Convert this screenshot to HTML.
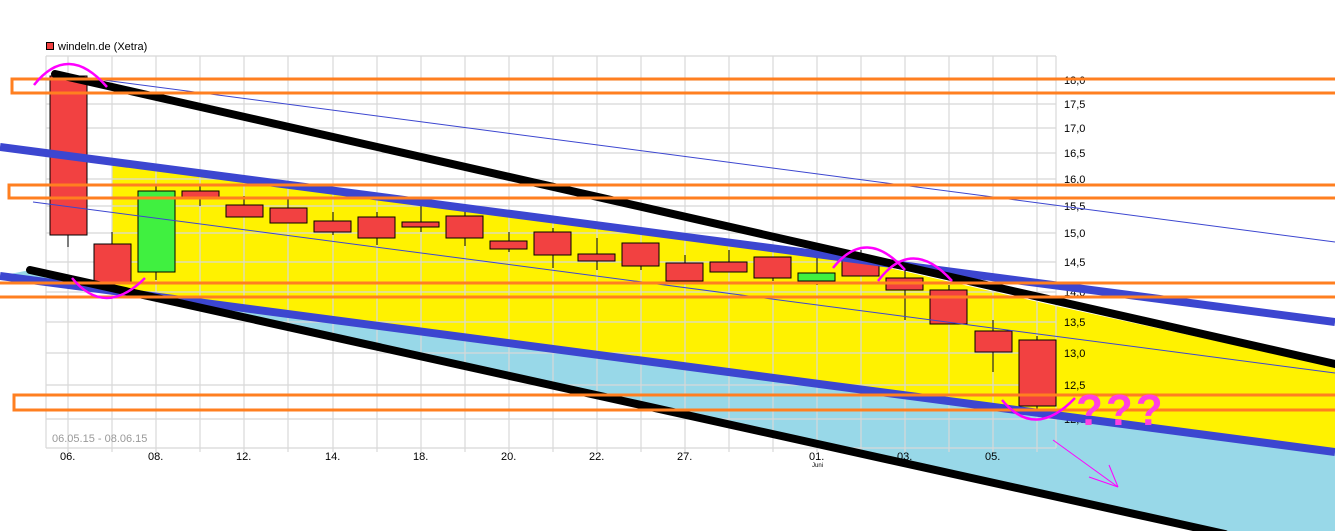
<!DOCTYPE html>
<html><head><meta charset="utf-8"><style>
html,body{margin:0;padding:0;background:#fff;width:1335px;height:531px;overflow:hidden}
svg{display:block}
text{font-family:"Liberation Sans",sans-serif}
</style></head><body>
<svg width="1335" height="531" viewBox="0 0 1335 531" xmlns="http://www.w3.org/2000/svg">
<rect width="1335" height="531" fill="#fff"/>
<polygon points="0,276 1335,452 1335,531 1215,531 30,270" fill="#98d8e8"/>
<polygon points="112,162 850,259 1056,306 1335,367 1335,452 112,291" fill="#fff200"/>
<g stroke="#d8d8d8" stroke-width="1.2">
<line x1="46" y1="56" x2="1056" y2="56"/>
<line x1="46" y1="80" x2="1056" y2="80"/><line x1="46" y1="104" x2="1056" y2="104"/>
<line x1="46" y1="128" x2="1056" y2="128"/><line x1="46" y1="153" x2="1056" y2="153"/>
<line x1="46" y1="179" x2="1056" y2="179"/><line x1="46" y1="206" x2="1056" y2="206"/>
<line x1="46" y1="233" x2="1056" y2="233"/><line x1="46" y1="262" x2="1056" y2="262"/>
<line x1="46" y1="292" x2="1056" y2="292"/><line x1="46" y1="322" x2="1056" y2="322"/>
<line x1="46" y1="353" x2="1056" y2="353"/><line x1="46" y1="385" x2="1056" y2="385"/>
<line x1="46" y1="419" x2="1056" y2="419"/><line x1="46" y1="448" x2="1056" y2="448"/>
<line x1="46" y1="56" x2="46" y2="448"/><line x1="1056" y1="56" x2="1056" y2="448"/>
<line x1="68" y1="56" x2="68" y2="452"/><line x1="112" y1="56" x2="112" y2="452"/><line x1="156" y1="56" x2="156" y2="452"/><line x1="200" y1="56" x2="200" y2="452"/><line x1="244" y1="56" x2="244" y2="452"/><line x1="288" y1="56" x2="288" y2="452"/><line x1="333" y1="56" x2="333" y2="452"/><line x1="377" y1="56" x2="377" y2="452"/><line x1="421" y1="56" x2="421" y2="452"/><line x1="465" y1="56" x2="465" y2="452"/><line x1="509" y1="56" x2="509" y2="452"/><line x1="553" y1="56" x2="553" y2="452"/><line x1="597" y1="56" x2="597" y2="452"/><line x1="641" y1="56" x2="641" y2="452"/><line x1="685" y1="56" x2="685" y2="452"/><line x1="729" y1="56" x2="729" y2="452"/><line x1="773" y1="56" x2="773" y2="452"/><line x1="817" y1="56" x2="817" y2="452"/><line x1="861" y1="56" x2="861" y2="452"/><line x1="905" y1="56" x2="905" y2="452"/><line x1="949" y1="56" x2="949" y2="452"/><line x1="993" y1="56" x2="993" y2="452"/><line x1="1037" y1="56" x2="1037" y2="452"/>
</g>
<g stroke="#000" stroke-width="1">
<line x1="68" y1="76" x2="68" y2="247"/><line x1="112" y1="232" x2="112" y2="290"/><line x1="156" y1="186" x2="156" y2="280"/><line x1="200" y1="186" x2="200" y2="206"/><line x1="244" y1="196" x2="244" y2="217"/><line x1="288" y1="198" x2="288" y2="223"/><line x1="333" y1="212" x2="333" y2="235"/><line x1="377" y1="212" x2="377" y2="245"/><line x1="421" y1="206" x2="421" y2="232"/><line x1="465" y1="210" x2="465" y2="246"/><line x1="509" y1="232" x2="509" y2="252"/><line x1="553" y1="228" x2="553" y2="268"/><line x1="597" y1="238" x2="597" y2="270"/><line x1="641" y1="243" x2="641" y2="270"/><line x1="685" y1="255" x2="685" y2="281"/><line x1="729" y1="250" x2="729" y2="272"/><line x1="773" y1="257" x2="773" y2="281"/><line x1="817" y1="258" x2="817" y2="285"/><line x1="861" y1="250" x2="861" y2="276"/><line x1="905" y1="265" x2="905" y2="320"/><line x1="949" y1="285" x2="949" y2="324"/><line x1="993" y1="320" x2="993" y2="372"/><line x1="1037" y1="336" x2="1037" y2="412"/>
</g>
<g stroke="#000" stroke-width="1" fill="#f24141">
<rect x="50" y="76" width="37" height="159"/><rect x="94" y="244" width="37" height="39"/>
<rect x="138" y="191" width="37" height="81" fill="#40f040"/>
<rect x="182" y="191" width="37" height="7"/><rect x="226" y="205" width="37" height="12"/><rect x="270" y="208" width="37" height="15"/><rect x="314" y="221" width="37" height="11"/><rect x="358" y="217" width="37" height="21"/><rect x="402" y="222" width="37" height="5"/><rect x="446" y="216" width="37" height="22"/><rect x="490" y="241" width="37" height="8"/><rect x="534" y="232" width="37" height="23"/><rect x="578" y="254" width="37" height="7"/><rect x="622" y="243" width="37" height="23"/><rect x="666" y="263" width="37" height="18"/><rect x="710" y="262" width="37" height="10"/><rect x="754" y="257" width="37" height="21"/>
<rect x="798" y="273" width="37" height="8" fill="#40f040"/>
<rect x="842" y="258" width="37" height="18"/><rect x="886" y="278" width="37" height="12"/><rect x="930" y="290" width="37" height="34"/><rect x="975" y="331" width="37" height="21"/><rect x="1019" y="340" width="37" height="66"/>
</g>
<g font-size="11" fill="#000">
<text x="1064" y="84">18,0</text><text x="1064" y="108">17,5</text><text x="1064" y="132">17,0</text><text x="1064" y="157">16,5</text><text x="1064" y="183">16,0</text><text x="1064" y="210">15,5</text><text x="1064" y="237">15,0</text><text x="1064" y="266">14,5</text><text x="1064" y="296">14,0</text><text x="1064" y="326">13,5</text><text x="1064" y="357">13,0</text><text x="1064" y="389">12,5</text><text x="1064" y="423">12,0</text>
<text x="60" y="460">06.</text><text x="148" y="460">08.</text><text x="236" y="460">12.</text><text x="325" y="460">14.</text><text x="413" y="460">18.</text><text x="501" y="460">20.</text><text x="589" y="460">22.</text><text x="677" y="460">27.</text><text x="809" y="460">01.</text><text x="897" y="460">03.</text><text x="985" y="460">05.</text>
<text x="812" y="467" font-size="6">Juni</text>
</g>
<text x="52" y="442" font-size="11" fill="#999">06.05.15 - 08.06.15</text>
<rect x="46.5" y="42.5" width="7" height="7" fill="#f24141" stroke="#000" stroke-width="1"/>
<text x="58" y="50" font-size="11" fill="#000">windeln.de (Xetra)</text>
<line x1="58" y1="74" x2="1335" y2="242" stroke="#3c46d0" stroke-width="1"/>
<line x1="33" y1="202" x2="1335" y2="373" stroke="#3c46d0" stroke-width="1"/>
<line x1="0" y1="147" x2="1335" y2="322" stroke="#3c46d0" stroke-width="8"/>
<line x1="0" y1="276" x2="1335" y2="452" stroke="#3c46d0" stroke-width="8"/>
<line x1="55" y1="74" x2="1335" y2="364" stroke="#000" stroke-width="8" stroke-linecap="round"/>
<line x1="30" y1="270" x2="1225" y2="534" stroke="#000" stroke-width="8" stroke-linecap="round"/>
<g fill="none" stroke="#ff7f20" stroke-width="3">
<rect x="12" y="79" width="1330" height="14"/><rect x="9" y="185" width="1333" height="13"/><rect x="-5" y="283" width="1347" height="14"/><rect x="14" y="395" width="1328" height="15"/>
</g>
<g fill="none" stroke="#ff00ff" stroke-width="2.5">
<path d="M34,85 Q68,42 107,87"/>
<path d="M72,278 Q105,318 145,278"/>
<path d="M833,268 Q866,226 905,270"/>
<path d="M878,281 Q912,236 952,281"/>
<path d="M1002,400 Q1035,440 1075,398"/>
</g>
<g stroke="#ff00ff" stroke-width="1" fill="none"><line x1="1053" y1="440" x2="1118" y2="487"/><line x1="1118" y1="487" x2="1109" y2="465"/><line x1="1118" y1="487" x2="1089" y2="477"/></g>
<text x="1076" y="425" font-size="44" font-weight="bold" fill="#ff40e0" letter-spacing="3">???</text>
</svg>
</body></html>
